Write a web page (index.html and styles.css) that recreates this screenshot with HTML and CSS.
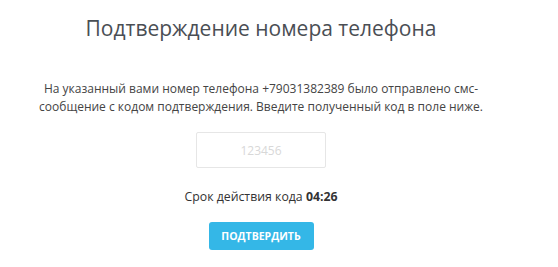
FILE: index.html
```html
<!DOCTYPE html>
<html lang="ru">
<head>
<meta charset="utf-8">
<link rel="stylesheet" href="styles.css">
</head>
<body>
<div class="page">
  <h1 class="title">Подтверждение номера телефона</h1>
  <p class="text">На указанный вами номер телефона +79031382389 было отправлено смс-<br>сообщение с кодом подтверждения. Введите полученный код в поле ниже.</p>
  <input class="code" type="text" placeholder="123456">
  <p class="timer">Срок действия кода <b>04:26</b></p>
  <button class="btn">ПОДТВЕРДИТЬ</button>
</div>
</body>
</html>
```
FILE: styles.css
```css
html, body { margin: 0; padding: 0; background: #fff; }
.page {
  width: 522px;
  display: flex;
  flex-direction: column;
  align-items: center;
  font-family: "Open Sans", "Liberation Sans", sans-serif;
  color: #444;
}
.title {
  margin: 13px 0 0;
  font-size: 21px;
  font-weight: 400;
  line-height: 30px;
  color: #4a4e54;
}
.text {
  margin: 37px 0 0;
  font-size: 12px;
  line-height: 18px;
  text-align: center;
  color: #444;
}
.code {
  margin-top: 16px;
  width: 130px;
  height: 36px;
  box-sizing: border-box;
  border: 1px solid #e6e6e6;
  border-radius: 2px;
  font-family: "Open Sans", "Liberation Sans", sans-serif;
  font-size: 12px;
  text-align: center;
  outline: none;
}
.code::placeholder { color: #d8d8d8; }
.timer {
  margin: 20px 0 0;
  font-size: 12.3px;
  line-height: 18px;
  color: #333;
}
.timer b { font-weight: 700; }
.btn {
  margin-top: 16px;
  width: 105px;
  height: 28px;
  border: none;
  border-radius: 3px;
  background: #34b7e7;
  color: #fff;
  font-family: "Open Sans", "Liberation Sans", sans-serif;
  font-weight: 700;
  font-size: 10.5px;
  padding: 0;
}
```
